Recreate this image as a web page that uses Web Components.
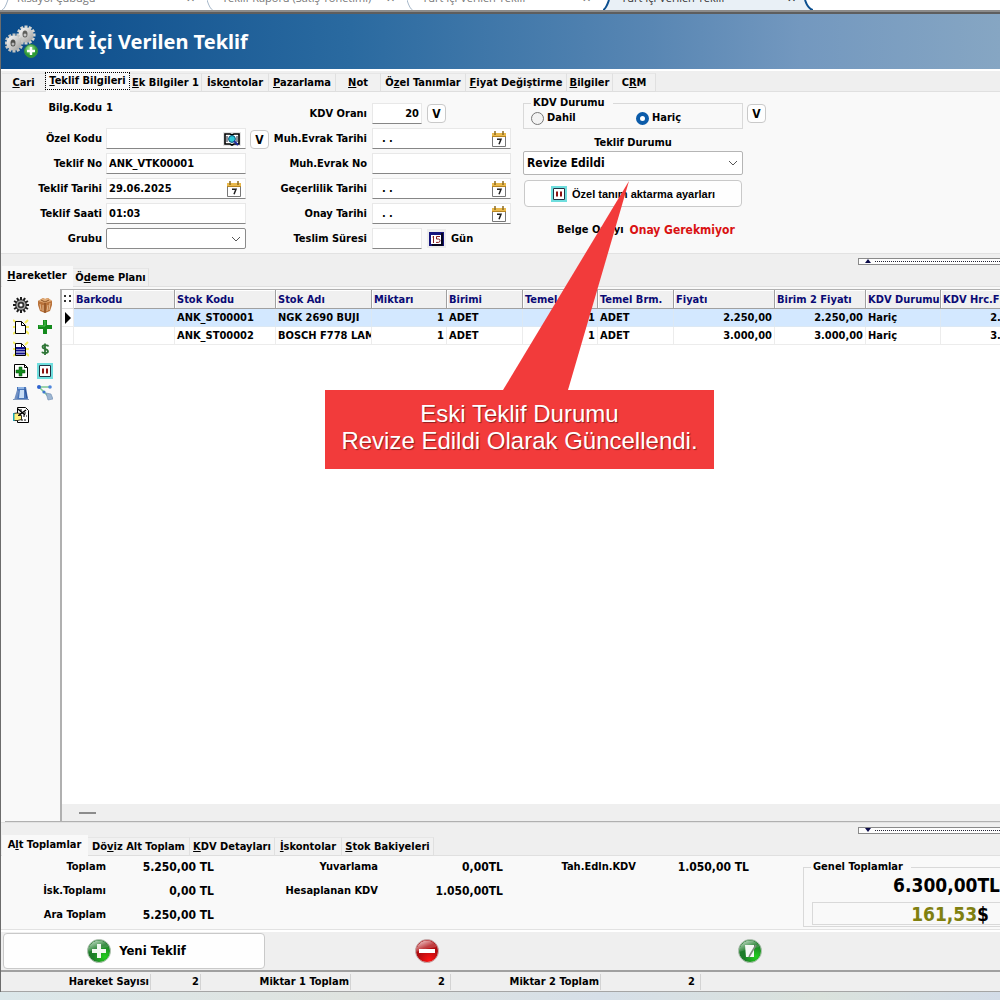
<!DOCTYPE html>
<html lang="tr">
<head>
<meta charset="utf-8">
<title>Yurt İçi Verilen Teklif</title>
<style>
  html, body { margin: 0; height: 100%; }
  body { font: bold 11px/14px "DejaVu Sans Condensed", "DejaVu Sans", sans-serif; color: #000; background: #efefef; overflow: hidden; }
</style>
</head>
<body>
<offer-window></offer-window>
<script>
const define = (name, html, setup) => {
  const template = document.createElement('template');
  template.innerHTML = html;
  customElements.define(name, class extends HTMLElement {
    constructor() {
      super();
      this.attachShadow({ mode: 'open' }).append(template.content.cloneNode(true));
    }
    connectedCallback() {
      if (setup && !this.ready) { this.ready = true; setup(this, this.shadowRoot); }
    }
  });
};

/* ---------- icons ---------- */
const teeth = (cx, cy, r, n, w, fill) => Array.from({ length: n }, (_, i) =>
  `<rect x="${cx - w / 2}" y="${cy - r}" width="${w}" height="${r}" fill="${fill}" transform="rotate(${i * 360 / n} ${cx} ${cy})"/>`).join('');
const rays = '<path d="M0 1l4 3M0 15l4-3M15 1l-3 3M16 15l-3-3M0 8h3M13 8h3" stroke="#f7ef5a" stroke-width="2"/>';
const page = (extra) => `<path d="M2.500 2.500h6l4 4v8h-10z" fill="#fff" stroke="#000"/><path d="M8.500 2.500v4h4" fill="none" stroke="#000"/>${extra}`;
const ICONS = {
  gears: [34, 34, `<defs><linearGradient id="m" x2="1" y2="1"><stop offset="0" stop-color="#fff"/><stop offset="1" stop-color="#9a9a98"/></linearGradient>
    <radialGradient id="g" cx=".4" cy=".3"><stop offset="0" stop-color="#a6e89a"/><stop offset="1" stop-color="#2c9a35"/></radialGradient></defs>
    ${teeth(21, 10, 9.5, 12, 3, '#d6d6d2')}<circle cx="21" cy="10" r="7.500" fill="url(#m)"/><ellipse cx="20" cy="9" rx="2.500" ry="3.500" fill="#5f5f5c"/><circle cx="20" cy="10" r="1.500" fill="#c8c8c8"/>
    ${teeth(9, 18, 9.5, 12, 3, '#c6c6c2')}<circle cx="9" cy="18" r="7.500" fill="url(#m)"/><ellipse cx="8" cy="18" rx="2.500" ry="3.500" fill="#4f4f4c"/><circle cx="8" cy="19" r="1.500" fill="#b8b8b8"/>
    <circle cx="26" cy="26" r="6.500" fill="url(#g)" stroke="#3a8f3f"/><path d="M26 22v8M22 26h8" stroke="#fff" stroke-width="2.400"/>`],
  gear: [16, 16, `${teeth(8, 8, 8, 12, 2, '#1d1d1d')}<circle cx="8" cy="8" r="5.800" fill="#222"/><circle cx="8" cy="8" r="4.800" fill="#a8a8a8"/><circle cx="8" cy="8" r="3.300" fill="#333"/><circle cx="8" cy="8" r="1.600" fill="#fff"/>`],
  box: [16, 16, `<path d="M1 4l5-3 2 1 3-1 4 3v4l-2 6-5 2-5-2-2-6z" fill="#b9723a"/><path d="M1 4l7 2 7-2-4-3-3 1-2-1z" fill="#e2ab76"/><path d="M8 6v10" stroke="#7a431a"/><path d="M3 7l1 6M6 8v6M11 8l-1 6M13 6l-1 7" stroke="#e4b98f"/><path d="M4 3l4 2 4-2" stroke="#8e5426" fill="none"/>`],
  newpage: [16, 16, `${rays}${page('')}`],
  listpage: [16, 16, `${rays}${page('<path d="M3 7h9M3 9.500h9M3 12.500h9" stroke="#10108c" stroke-width="2"/>')}`],
  plus: [16, 16, `<path d="M6 1h4v5h5v4h-5v5H6v-5H1V6h5z" fill="#138a1c"/><path d="M7 2h1v5H2" stroke="#52c454" fill="none"/>`],
  dollar: [16, 16, `<path d="M11.500 5.500C11 3.800 5.500 3.500 5.500 6 5.500 8.500 11 7.500 11 10.300 11 12.800 5.500 12.500 5 10.800M8 2.500v11.500" stroke="#2c7434" stroke-width="1.800" fill="none"/>`],
  addpage: [16, 16, `<path d="M1.500 1.500h10l3 3v10h-13z" fill="#fff" stroke="#000"/><path d="M11.500 1.500v3h3" fill="none" stroke="#000"/><path d="M6 4h3v3h3v3H9v3H6v-3H3V7h3z" fill="#128a1c" stroke="#04500c" stroke-width=".5"/>`],
  pause: [16, 16, `<path d="M1 1h14v14H1z" fill="#fff" stroke="#6fdede" stroke-width="2"/><path d="M2.500 2.500h11v11h-11z" fill="#fff" stroke="#234"/><path d="M5 5.500h2v5H5zM9 5.500h2v5H9z" fill="#8c1212"/>`],
  clip: [16, 16, `<path d="M4 2h9l2 12H4z" fill="#4a76ba"/><path d="M7 5h4v8H6z" fill="#c9def5"/><path d="M1 15L4 5l2 1-2 9z" fill="#6f8fc2"/><path d="M0 14h16v1H0z" fill="#8199bd"/><path d="M5 2h6v2H5z" fill="#8fb4e4"/><path d="M12 4l2 9" stroke="#2a4f91"/>`],
  nodes: [16, 16, `<path d="M2 2h11M2 2l10 10" stroke="#7cc893" stroke-width="1.500"/><circle cx="2" cy="2" r="2" fill="#2f62d0"/><circle cx="13" cy="2" r="1.800" fill="#4f87dc"/><circle cx="7" cy="7" r="1.600" fill="#3c78cf"/><path d="M9 8l5 1 2 5-5 1z" fill="#9db6d2" stroke="#6d8bb0" stroke-width=".6"/>`],
  handpage: [16, 16, `<path d="M4.500 .5h8l3 3v12h-11z" fill="#fff" stroke="#000"/><path d="M7 3h3M11 6h3M10 9h4M8 13h5" stroke="#000" stroke-dasharray="2 1"/><path d="M13 3L5 9M5 2l7 6" stroke="#000" stroke-width="1.500"/><path d="M.5 6.500v7h4l4-1v-4H5l3-2-4-.5z" fill="#ffef7a" stroke="#000" stroke-width=".8"/><path d="M0 6h1.500v8H0z" fill="#1ba5b5"/>`],
  book: [18, 16, `<path d="M0 1h18v14H0z" fill="#e4e4e4"/><path d="M2 3h5l2 1 2-1h5v10h-5l-2 1-2-1H2z" fill="#fff" stroke="#000" stroke-width="1.600"/><path d="M4 5v6M14 5v6" stroke="#223"/><circle cx="9" cy="8" r="3.400" fill="#2cc6d6" stroke="#0b5378"/><path d="M11 10l4 4" stroke="#1c2b9c" stroke-width="2"/>`],
  calendar: [14, 16, `<path d="M.5 3h13v12.500H.5z" fill="#fff" stroke="#777"/><path d="M0 2h14v4H0z" fill="#e9b94c"/><path d="M0 5.500h14" stroke="#b78420"/><path d="M3 0v4M11 0v4" stroke="#8a6a20" stroke-width="1.500"/><path d="M5 8.200h4l-2 5" stroke="#222" stroke-width="1.500" fill="none"/>`],
  day15: [16, 16, `<path d="M0 1h15v14H0z" fill="#14147c"/><path d="M2 4h10v9H2z" fill="#fff"/><path d="M4.500 5v7M3.500 6h1M11 5.500H7.500v2.500h2q1.500 0 1.500 1.600t-1.500 1.800H7" stroke="#8a1d1d" fill="none"/><path d="M13 2v12H3" stroke="#000" fill="none" stroke-width="1.500"/>`],
  chevron: [10, 6, `<path d="M1 1l4 4 4-4" fill="none" stroke="#555"/>`],
  add: [24, 24, `<defs><radialGradient id="a" cx=".75" cy=".75"><stop offset="0" stop-color="#22d01c"/><stop offset="1" stop-color="#1c7c28"/></radialGradient><linearGradient id="s" x2=".8" y2="1"><stop offset="0" stop-color="#fff" stop-opacity=".85"/><stop offset=".6" stop-color="#fff" stop-opacity=".15"/></linearGradient></defs><circle cx="12" cy="12" r="11.500" fill="url(#a)" stroke="#b6c2b6"/><path d="M1 13A11 11 0 0 1 22 8Q11 9 1 13" fill="url(#s)"/><path d="M10 5h4v5h5v4h-5v5h-4v-5H5v-4h5z" fill="#f1f8f1"/>`],
  remove: [24, 24, `<defs><radialGradient id="a" cx=".6" cy=".9"><stop offset="0" stop-color="#ff1414"/><stop offset="1" stop-color="#b00c10"/></radialGradient><linearGradient id="s" x2=".8" y2="1"><stop offset="0" stop-color="#fff" stop-opacity=".9"/><stop offset=".6" stop-color="#fff" stop-opacity=".2"/></linearGradient></defs><circle cx="12" cy="12" r="11.500" fill="url(#a)" stroke="#c4b0b0"/><path d="M1 13A11 11 0 0 1 22 8Q11 9 1 13" fill="url(#s)"/><path d="M4 10h16v4H4z" fill="#fff"/>`],
  edit: [24, 24, `<defs><radialGradient id="a" cx=".75" cy=".75"><stop offset="0" stop-color="#22d01c"/><stop offset="1" stop-color="#1c7c28"/></radialGradient><linearGradient id="s" x2=".8" y2="1"><stop offset="0" stop-color="#fff" stop-opacity=".85"/><stop offset=".6" stop-color="#fff" stop-opacity=".15"/></linearGradient></defs><circle cx="12" cy="12" r="11.500" fill="url(#a)" stroke="#b6c2b6"/><path d="M1 13A11 11 0 0 1 22 8Q11 9 1 13" fill="url(#s)"/><path d="M7 6h9v12H8z" fill="#f4f8f4"/><path d="M18 6l-6 10-1 2" stroke="#7c8a7c" stroke-width="1.600" fill="none"/>`]
};
define('ui-icon', `<style>:host{display:inline-flex;flex:none}svg{display:block}</style>`, (host, root) => {
  const [w, h, art] = ICONS[host.getAttribute('name')];
  root.innerHTML += `<svg width="${w}" height="${h}" viewBox="0 0 ${w} ${h}" aria-hidden="true">${art}</svg>`;
});

/* ---------- document tabs at the very top ---------- */
define('document-tab', `
<style>
  :host { display: flex; flex: 0 0 200px; height: 10px; position: relative; color: #777; }
  :host([first]) { flex-basis: 205px; }
  :host([current]) { flex-basis: 210px; color: #333; }
  svg { position: absolute; inset: 0; width: 100%; height: 100%; }
  .text { position: relative; display: flex; flex: 1; justify-content: space-between; margin: -10px 12px 0 15px; font: 11px/16px "Open Sans", sans-serif; white-space: nowrap; }
  :host([current]) .text { margin: -10px 17px 0 18px; }
</style>
<svg preserveAspectRatio="none" viewBox="0 0 210 10" aria-hidden="true"></svg>
<div class="text"><slot></slot><span>✕</span></div>`, (host, root) => {
  root.querySelector('svg').innerHTML = host.hasAttribute('current')
    ? '<path d="M0 10Q3 9 6 0H202Q205 9 210 10z" fill="#e9f0f6"/><path d="M0 10Q3 9 6 0M202 0Q205 9 210 10" stroke="#0c4f8f" stroke-width="2" fill="none"/>'
    : host.hasAttribute('first') ? '<path d="M0 10Q3 9 6 0" stroke="#a5b6c8" fill="none"/>'
    : '<path d="M0 0Q3 9 6 10" stroke="#a5b6c8" fill="none"/>';
});
define('document-tabs', `
<style>
  :host { display: flex; height: 10px; overflow: hidden; background: #fff; padding-left: 2px; border-bottom: 2px solid #8b8b8b; box-shadow: 0 2px #5e5e5e; margin-bottom: 2px; }
</style><slot></slot>`);

/* ---------- banner ---------- */
define('title-banner', `
<style>
  :host { display: flex; align-items: center; gap: 2px; height: 55px; padding-left: 4px; background: linear-gradient(90deg, #0a4b8a, #2a6aa0 35%, #5886b3 65%, #7398bf 80%, #86a6c3); color: #fff; border-bottom: 2px solid #fff; }
  h1 { margin: 0; font: bold 20px/28px "Noto Sans", sans-serif; }
</style>
<ui-icon name="gears"></ui-icon><h1><slot></slot></h1>`);

/* ---------- tabs ---------- */
define('tab-item', `
<style>
  :host { display: flex; flex: 0 0 var(--w); height: 19px; }
  :host([active]) { height: 21px; }
  button { all: unset; box-sizing: border-box; flex: 1; display: flex; align-items: center; justify-content: center; padding-top: 1px; white-space: pre; border-right: 1px solid #e0e0e0; border-top: 1px solid #e6e6e6; border-bottom: 1px solid #dedede; background: #f1f1f1; }
  :host([active]) button { background: #f9f9f9; border-color: #f9f9f9; padding: 0 0 1px; }
  :host([focused]) span { outline: 1px dotted #000; outline-offset: 1px; padding: 0 2px; }
</style>
<button type="button" role="tab"><span><slot></slot></span></button>`, (host, root) =>
  root.querySelector('button').setAttribute('aria-selected', host.hasAttribute('active')));
define('tab-strip', `
<style>:host{display:flex;align-items:flex-end;height:21px;background:#efefef;box-shadow:inset 0 -1px #e0e0e0;padding-left:1px}</style><slot></slot>`, host => host.setAttribute('role', 'tablist'));

/* ---------- form pieces ---------- */
define('v-button', `
<style>
  :host { display: flex; flex: none; }
  button { font: inherit; font-size: 12px; width: 19px; height: 19px; padding: 0; border: 1px solid #c9c9c9; border-radius: 4px; background: #fefefe; color: #000; }
</style><button type="button">V</button>`);

define('form-field', `
<style>
  :host { display: flex; align-items: center; height: 21px; gap: var(--gap, 5px); }
  label { flex: 0 0 var(--label); text-align: right; white-space: nowrap; padding-top: 1px; }
  .box { box-sizing: border-box; position: relative; display: flex; align-items: center; width: var(--control, 139px); height: 21px; background: #fff; border: 1px solid #e8e8e8; border-bottom-color: #868686; }
  input, select { appearance: none; font: inherit; color: #000; box-sizing: border-box; flex: 1; width: 100%; min-width: 0; height: 100%; border: 0; background: none; padding: 0 2px; margin: 0; outline: 0; }
  :host([number]) { --control: 50px; }
  :host([number]) input { text-align: right; }
  .box ui-icon { margin-right: 4px; }
  :host([drop]) .box { border: 1px solid #8b8b8b; border-radius: 2px; }
  :host([plain]) { height: 24px; align-items: flex-start; }
  output { width: var(--control); padding-top: 1px; }
</style>
<label for="c"></label>`, (host, root) => {
  const a = n => host.getAttribute(n) ?? '';
  root.querySelector('label').textContent = a('label');
  const icon = a('icon') ? `<ui-icon name="${a('icon')}"></ui-icon>` : '';
  const html = host.hasAttribute('plain') ? `<output id="c">${a('value')}</output>`
    : host.hasAttribute('drop') ? `<div class="box"><select id="c"><option>${a('value')}</option></select><ui-icon name="chevron"></ui-icon></div>`
    : `<div class="box"><input id="c" type="text" value="${a('value')}">${icon}</div>`;
  root.append(document.createRange().createContextualFragment(html + '<slot></slot>'));
});

define('vat-choice', `
<style>
  :host { display: block; }
  fieldset { margin: 0; padding: 1px 1px 3px 7px; border: 1px solid #d9d9d9; min-width: 0; }
  legend { padding: 0 8px 0 2px; line-height: 14px; }
  div { display: flex; align-items: center; }
  label { display: flex; align-items: center; gap: 3px; flex: 1; }
  input { appearance: none; box-sizing: border-box; width: 13px; height: 13px; margin: 0; border: 1px solid #777; border-radius: 50%; background: #f3f3f3; }
  input:checked { border: 4px solid #0b5ba9; background: #fff; }
</style>
<fieldset><legend>KDV Durumu</legend><div>
<label><input type="radio" name="v">Dahil</label><label><input type="radio" name="v" checked>Hariç</label>
</div></fieldset>`);

define('status-panel', `
<style>
  :host { display: flex; flex-direction: column; width: 220px; padding-top: 4px; }
  .head { text-align: center; margin-top: 7px; line-height: 14px; }
  .box { box-sizing: border-box; display: flex; align-items: center; height: 24px; margin-top: 1px; border: 1px solid #b5b5b5; border-radius: 2px; background: #fff; padding-right: 4px; }
  select { appearance: none; font: inherit; font-size: 12px; color: #000; flex: 1; height: 100%; border: 0; background: none; padding: 0 3px; outline: 0; }
  button { font: bold 11px/14px "Liberation Sans", sans-serif; color: #000; height: 27px; margin: 5px 1px 0; display: flex; align-items: center; justify-content: center; gap: 5px; border: 1px solid #c9c9c9; border-radius: 4px; background: #fefefe; padding: 0; }
  p { display: flex; gap: 6px; margin: 15px 0 0; padding-left: 34px; white-space: nowrap; line-height: 16px; }
  strong { font-size: 12px; color: #d91212; }
</style>
<vat-choice></vat-choice>
<label class="head" for="s">Teklif Durumu</label>
<div class="box"><select id="s"><option>Revize Edildi</option></select><ui-icon name="chevron"></ui-icon></div>
<button type="button"><ui-icon name="pause"></ui-icon>Özel tanım aktarma ayarları</button>
<p><span>Belge Onayı</span><strong>Onay Gerekmiyor</strong></p>`);

define('offer-form', `
<style>
  :host { display: flex; align-items: flex-start; height: 162px; box-sizing: border-box; background: #f9f9f9; border-bottom: 1px solid #e2e2e2; }
  .col { display: flex; flex-direction: column; gap: 4px; padding-top: 11px; }
  .a { --label: 101px; --gap: 4px; --control: 140px; padding-top: 8px; }
  .b { --label: 98px; margin-right: 12px; }
  .v { padding-top: 12px; margin-left: 4px; }
  .first { padding-top: 38px; margin-left: 4px; }
  .day { display: flex; width: 19px; height: 19px; align-items: center; justify-content: center; border: 0; background: #ececec; padding: 0; font: inherit; }
  .unit { padding-top: 1px; }
</style>
<div class="col a">
  <form-field plain label="Bilg.Kodu" value="1"></form-field>
  <form-field label="Özel Kodu" icon="book"></form-field>
  <form-field label="Teklif No" value="ANK_VTK00001"></form-field>
  <form-field label="Teklif Tarihi" value="29.06.2025" icon="calendar"></form-field>
  <form-field label="Teklif Saati" value="01:03"></form-field>
  <form-field drop label="Grubu" value=""></form-field>
</div>
<div class="col first"><v-button></v-button></div>
<div class="col b">
  <form-field number label="KDV Oranı" value="20"><v-button></v-button></form-field>
  <form-field label="Muh.Evrak Tarihi" value="  . ." icon="calendar"></form-field>
  <form-field label="Muh.Evrak No"></form-field>
  <form-field label="Geçerlilik Tarihi" value="  . ." icon="calendar"></form-field>
  <form-field label="Onay Tarihi" value="  . ." icon="calendar"></form-field>
  <form-field number label="Teslim Süresi"><button class="day" type="button" aria-label="Takvim"><ui-icon name="day15"></ui-icon></button><span class="unit">Gün</span></form-field>
</div>
<status-panel></status-panel>
<div class="col v"><v-button></v-button></div>`);

/* ---------- splitter ---------- */
define('pane-splitter', `
<style>
  :host { box-sizing: border-box; display: flex; height: 12px; padding-top: 2px; background: #efefef; justify-content: flex-end; align-items: center; }
  :host([down]) { height: 13px; border-top: 1px solid #e2e2e2; }
  div { box-sizing: border-box; width: 142px; height: 7px; border: 1px solid #8a8a8a; border-right: 0; background: #fdfdfd; display: flex; align-items: center; gap: 4px; padding-left: 6px; }
  i { flex: 1; border-top: 1px dotted #223; }
  svg { display: block; }
</style>
<div><svg width="6" height="4" viewBox="0 0 6 4" aria-hidden="true"><path fill="#0c0c4a"/></svg><i></i></div>`, (host, root) =>
  root.querySelector('path').setAttribute('d', host.hasAttribute('down') ? 'M0 0h6L3 4z' : 'M0 4h6L3 0z'));

/* ---------- tool palette ---------- */
define('tool-palette', `
<style>
  :host { display: grid; grid-template-columns: 24px 24px; grid-auto-rows: 22px; align-content: start; width: 55px; box-sizing: border-box; padding: 5px 0 0 4px; background: #f9f9f9; border-bottom: 1px solid #b0b0b0; }
  button { all: unset; display: flex; align-items: center; justify-content: center; }
</style>`, (host, root) => {
  [['gear', 'Ayarlar'], ['box', 'Stok'], ['newpage', 'Yeni'], ['plus', 'Ekle'], ['listpage', 'Liste'], ['dollar', 'Döviz'], ['addpage', 'Sayfa ekle'], ['pause', 'Özel tanım'], ['clip', 'Dosya'], ['nodes', 'Bağlantılar'], ['handpage', 'Düzenle']]
    .forEach(([icon, name]) => root.append(document.createRange().createContextualFragment(
      `<button type="button" aria-label="${name}"><ui-icon name="${icon}"></ui-icon></button>`)));
});

/* ---------- data grid ---------- */
const COLUMNS = [['Barkodu', 101], ['Stok Kodu', 101], ['Stok Adı', 96], ['Miktarı', 75, 1], ['Birimi', 76], ['Temel Mik.', 75, 1], ['Temel Brm.', 76], ['Fiyatı', 101, 1], ['Birim 2 Fiyatı', 91, 1], ['KDV Durumu', 75], ['KDV Hrc.Fiyatı', 101, 1]];
const ROWS = [
  ['', 'ANK_ST00001', 'NGK 2690 BUJI', '1', 'ADET', '1', 'ADET', '2.250,00', '2.250,00', 'Hariç', '2.250,00'],
  ['', 'ANK_ST00002', 'BOSCH F778 LAMBA', '1', 'ADET', '1', 'ADET', '3.000,00', '3.000,00', 'Hariç', '3.000,00']
];
define('data-grid', `
<style>
  :host { display: flex; flex-direction: column; flex: 1; min-width: 0; background: #fff; border: 2px solid #b0b0b0; border-width: 1px 0 1px 2px; overflow: hidden; }
  .view { flex: 1; overflow: hidden; }
  table { table-layout: fixed; border-collapse: separate; border-spacing: 0; }
  th, td { box-sizing: border-box; height: 18px; padding: 1px 2px 0; overflow: hidden; white-space: nowrap; font-weight: bold; text-align: left; border-right: 1px solid #ececec; border-bottom: 1px solid #ececec; line-height: 14px; }
  th { height: 19px; padding-top: 2px; color: #0a0a74; background: #f0f0f0; border-right-color: #a0a0a0; border-bottom-color: #a0a0a0; box-shadow: inset 1px 1px #fff; }
  td.n { text-align: right; }
  th:first-child { background: #fff; border-right-color: #ddd; border-bottom-color: #ddd; color: #000; }
  th:first-child, td:first-child { padding: 0 1px; }
  svg { display: block; }
  tr.on td:not(:first-child) { background: #d3e8ff; border-color: #dbe8f4; }
  .scroll { height: 17px; background: #efefef; display: flex; align-items: center; padding-left: 17px; }
  .scroll i { width: 17px; height: 2px; background: #8c8c8c; }
</style>
<div class="view"><table><thead></thead><tbody></tbody></table></div>
<div class="scroll"><i></i></div>`, (host, root) => {
  const table = root.querySelector('table');
  table.style.width = COLUMNS.reduce((s, c) => s + c[1], 12) + 'px';
  root.querySelector('thead').innerHTML = `<tr><th style="width:12px"><svg width="9" height="9" viewBox="0 0 9 9"><path d="M1 0h2v2H1zM6 0h2v2H6zM1 5h2v2H1zM6 5h2v2H6z" fill="#333"/></svg></th>`
    + COLUMNS.map(c => `<th style="width:${c[1]}px">${c[0]}</th>`).join('') + '</tr>';
  root.querySelector('tbody').innerHTML = ROWS.map((r, i) => `<tr class="${i ? '' : 'on'}"><td>${i ? '' : '<svg width="8" height="12" viewBox="0 0 8 12"><path d="M2 0l6 6-6 6z"/></svg>'}</td>`
    + r.map((v, k) => `<td class="${COLUMNS[k][2] ? 'n' : ''}">${v}</td>`).join('') + '</tr>').join('');
});

/* ---------- totals ---------- */
define('total-line', `
<style>
  :host { display: flex; height: 24px; align-items: center; }
  span { flex: 0 0 var(--name); text-align: right; white-space: nowrap; }
  b { flex: 1; text-align: right; font-size: 12px; white-space: pre; }
</style><span></span><b><slot></slot></b>`, (host, root) => root.querySelector('span').textContent = host.getAttribute('name'));
define('totals-panel', `
<style>
  :host { display: flex; height: 74px; background: #f9f9f9; border-bottom: 1px solid #e2e2e2; box-sizing: border-box; overflow: hidden; }
  .col { width: 213px; --name: 105px; margin-top: -1px; }
  .two { width: 289px; --name: 164px; }
  .three { width: 246px; --name: 133px; margin-right: 54px; }
  fieldset { box-sizing: border-box; margin: 4px 0 0; padding: 0; border: 1px solid #d9d9d9; border-right: 0; min-width: 0; }
  .grand { flex: 1; height: 67px; }
  legend { padding: 0 8px 0 2px; margin-left: 7px; }
  .grand div { font-size: 19px; line-height: 22px; text-align: right; white-space: nowrap; }
  .inner { margin: 6px 0 0 8px; height: 23px; }
  .grand .inner div { padding-right: 11px; }
  .inner div span { color: #808010; }
</style>
<div class="col"><total-line name="Toplam">5.250,00 TL</total-line><total-line name="İsk.Toplamı">0,00 TL</total-line><total-line name="Ara Toplam">5.250,00 TL</total-line></div>
<div class="col two"><total-line name="Yuvarlama">0,00TL</total-line><total-line name="Hesaplanan KDV">1.050,00TL</total-line></div>
<div class="col three"><total-line name="Tah.Edln.KDV">1.050,00 TL</total-line></div>
<fieldset class="grand"><legend>Genel Toplamlar</legend><div>6.300,00TL</div>
<fieldset class="inner"><div><span>161,53</span>$</div></fieldset></fieldset>`);

/* ---------- actions and status ---------- */
define('action-bar', `
<style>
  :host { display: grid; grid-template-columns: 262px 322px 322px; column-gap: 1px; height: 36px; padding: 1px 0 1px 2px; border-top: 2px solid #fff; border-bottom: 2px solid #a0a0a0; background: #efefef; }
  button { font: bold 13px/16px "DejaVu Sans Condensed", sans-serif; color: #000; display: flex; align-items: center; justify-content: center; gap: 8px; border: 0; background: none; padding: 0; }
  .main { background: #fefefe; border: 1px solid #c9c9c9; border-radius: 4px; padding-left: 5px; }
</style>
<button type="button" class="main"><ui-icon name="add"></ui-icon>Yeni Teklif</button>
<button type="button" aria-label="Sil"><ui-icon name="remove"></ui-icon></button>
<button type="button" aria-label="Düzenle"><ui-icon name="edit"></ui-icon></button>`);
define('status-bar', `
<style>
  :host { display: grid; grid-template-columns: 150px 50px 150px 100px 150px 100px; height: 19px; align-items: center; background: #efefef; border-bottom: 1px solid #a5a5a5; }
  span { text-align: right; padding-right: 1px; border-right: 1px solid #d3d3d3; line-height: 16px; }
  .w { padding-right: 5px; }
</style>
<span>Hareket Sayısı</span><span>2</span><span>Miktar 1 Toplam</span><span class="w">2</span><span>Miktar 2 Toplam</span><span class="w">2</span>`);

/* ---------- callout over the window ---------- */
define('note-callout', `
<style>
  :host { position: absolute; left: 325px; top: 178px; width: 389px; }
  svg { display: block; width: 389px; height: 212px; }
  div { background: #f23b3b; color: #fff; font: 24px/27px "Liberation Sans", sans-serif; text-align: center; padding: 10px 0 15px; text-shadow: 1px 1px 1px #8a2020; white-space: nowrap; }
</style>
<svg viewBox="0 0 389 212" aria-hidden="true"><path d="M304 3L178 212h65z" fill="#f23b3b"/></svg>
<div><slot></slot></div>`);

/* ---------- window ---------- */
define('offer-window', `
<style>
  :host { display: flex; flex-direction: column; height: 100vh; position: relative; overflow: hidden; background: #efefef; }
  main { flex: 1; min-height: 0; display: flex; flex-direction: column; border-left: 1px solid #6c6c6c; }
  .work { flex: 1; min-height: 0; display: flex; padding: 2px 0 0 4px; background: #f9f9f9; }
  .desk { height: 8px; background: linear-gradient(90deg, #dbe7ea, #dfe3df 35%, #d6dfe8 60%, #dae2dc 82%, #d3dce8); }
</style>
<document-tabs>
  <document-tab first>Kısayol Çubuğu</document-tab><document-tab>Teklif Raporu (Satış Yönetimi)</document-tab>
  <document-tab style="flex-basis:196px">Yurt İçi Verilen Teklif</document-tab><document-tab current>Yurt İçi Verilen Teklif</document-tab>
</document-tabs>
<main>
  <title-banner>Yurt İçi Verilen Teklif</title-banner>
  <tab-strip>
    <tab-item style="--w:44px"><u>C</u>ari</tab-item><tab-item style="--w:84px" active focused><u>T</u>eklif Bilgileri</tab-item>
    <tab-item style="--w:72px"><u>E</u>k Bilgiler 1</tab-item><tab-item style="--w:67px">İsk<u>o</u>ntolar</tab-item>
    <tab-item style="--w:67px"><u>P</u>azarlama</tab-item><tab-item style="--w:45px"><u>N</u>ot</tab-item>
    <tab-item style="--w:85px">Ö<u>z</u>el Tanımlar</tab-item><tab-item style="--w:101px"><u>F</u>iyat Değiştirme</tab-item>
    <tab-item style="--w:46px"><u>B</u>ilgiler</tab-item><tab-item style="--w:43px">C<u>R</u>M</tab-item>
  </tab-strip>
  <offer-form></offer-form>
  <pane-splitter></pane-splitter>
  <tab-strip><tab-item style="--w:71px" active><u>H</u>areketler</tab-item><tab-item style="--w:76px">Ö<u>d</u>eme Planı</tab-item></tab-strip>
  <div class="work"><tool-palette></tool-palette><data-grid></data-grid></div>
  <pane-splitter down></pane-splitter>
  <tab-strip>
    <tab-item style="--w:86px" active>A<u>l</u>t Toplamlar</tab-item><tab-item style="--w:102px">Dö<u>v</u>iz Alt Toplam</tab-item>
    <tab-item style="--w:85px"><u>K</u>DV Detayları</tab-item><tab-item style="--w:67px"><u>İ</u>skontolar</tab-item><tab-item style="--w:92px"><u>S</u>tok Bakiyeleri</tab-item>
  </tab-strip>
  <totals-panel></totals-panel>
  <action-bar></action-bar>
  <status-bar></status-bar>
</main>
<div class="desk"></div>
<note-callout>Eski Teklif Durumu<br>Revize Edildi Olarak Güncellendi.</note-callout>`);
</script>
</body>
</html>
